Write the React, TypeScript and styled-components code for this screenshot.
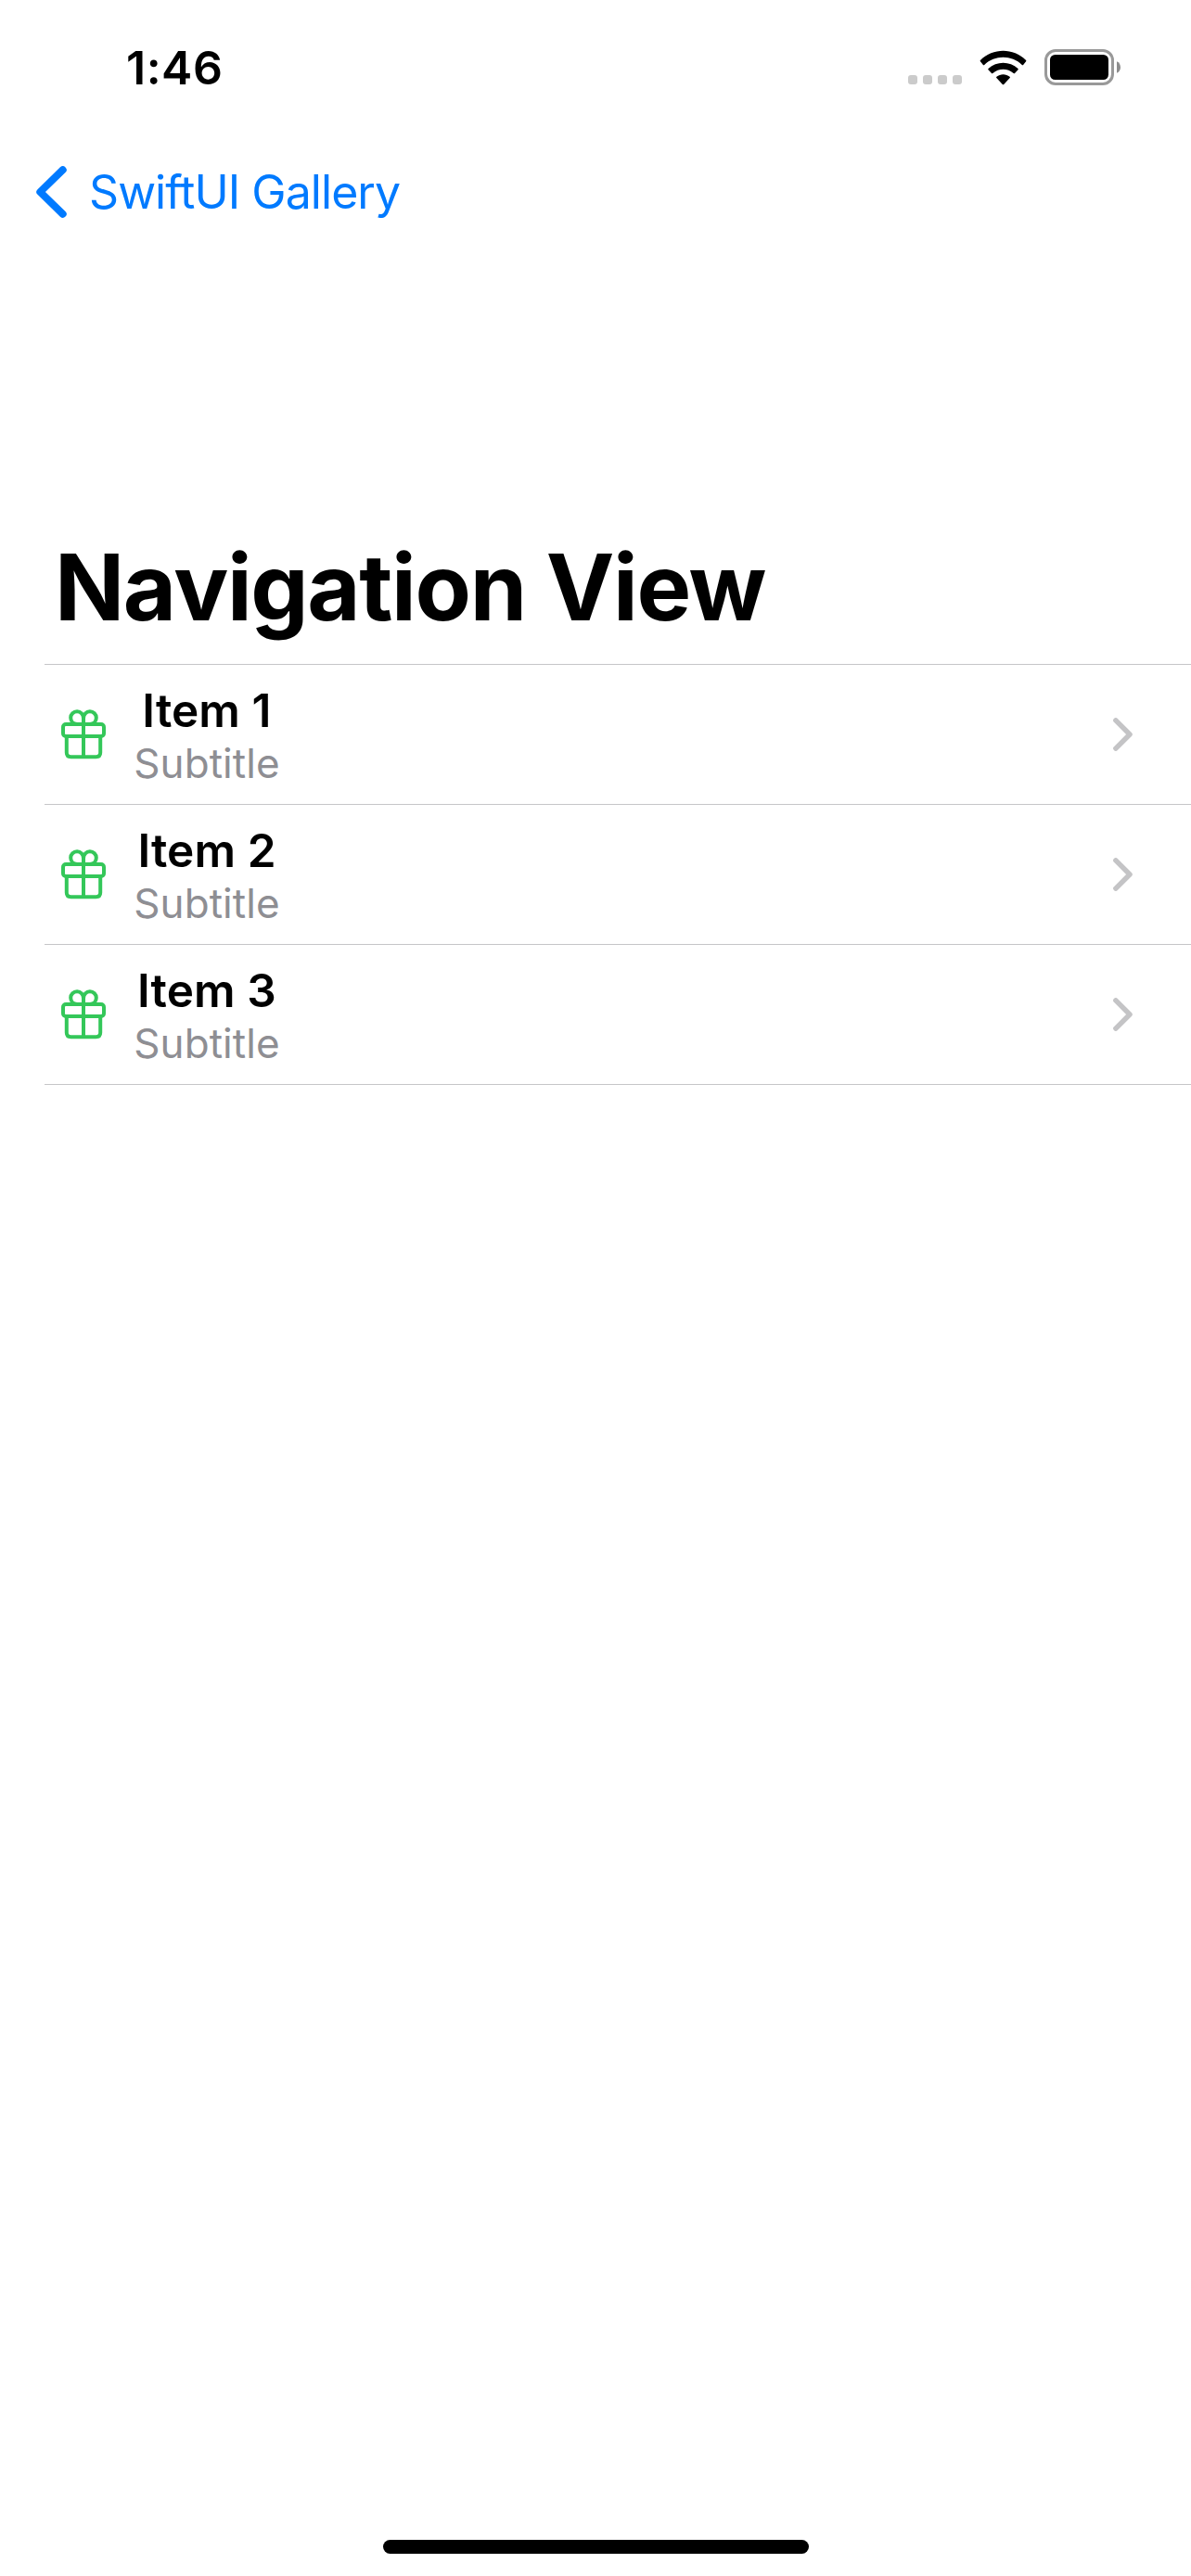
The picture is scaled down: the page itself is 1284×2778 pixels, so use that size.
import React from "react";
import styled, { createGlobalStyle } from "styled-components";

const GlobalStyle = createGlobalStyle`
  body {
    margin: 0;
    background: #ffffff;
    font-family: Inter, "Liberation Sans", sans-serif;
    color: #000000;
  }
`;

const Screen = styled.div`
  display: flex;
  flex-direction: column;
  width: 1284px;
  height: 2778px;
  box-sizing: border-box;
  overflow: hidden;
  background: #ffffff;
`;

const StatusBar = styled.header`
  display: flex;
  justify-content: space-between;
  height: 141px;
  padding: 0 76px 0 136px;
  box-sizing: border-box;
`;

const Time = styled.span`
  margin-top: 43px;
  font-size: 50px;
  line-height: 60px;
  font-weight: 600;
  letter-spacing: 0.5px;
`;

const Indicators = styled.div`
  display: flex;
  align-items: flex-end;
  height: 92px;
`;

const Dots = styled.div`
  display: flex;
  gap: 6px;
  margin: 0 19px 1px 0;
`;

const Dot = styled.i`
  width: 10px;
  height: 10px;
  border-radius: 3px;
  background: #cbcbcb;
`;

const WifiGlyph = styled.svg`
  width: 51px;
  height: 38px;
  margin: 0 19px 0 0;
`;

const BatteryGlyph = styled.svg`
  width: 82px;
  height: 39px;
`;

const NavBar = styled.nav`
  display: flex;
  height: 132px;
  padding-left: 38px;
`;

const BackButton = styled.a`
  display: flex;
  align-items: center;
  gap: 23px;
  height: 132px;
  color: #007aff;
`;

const BackLabel = styled.span`
  font-size: 50px;
  line-height: 60px;
  letter-spacing: -0.95px;
  white-space: nowrap;
`;

const Title = styled.h1`
  margin: 300px 0 0 59px;
  font-size: 98.7px;
  line-height: 120px;
  font-weight: 700;
  letter-spacing: -1.35px;
  white-space: nowrap;
`;

const List = styled.ul`
  list-style: none;
  margin: 23px 0 0 48px;
  padding: 0;
  border-top: 1px solid #c6c6c8;
`;

const Row = styled.li`
  display: flex;
  align-items: center;
  height: 151px;
  padding: 0 63px 0 18px;
  box-sizing: border-box;
  border-bottom: 1px solid #c6c6c8;
`;

const RowText = styled.div`
  display: flex;
  flex-direction: column;
  align-items: center;
  flex: none;
  width: 158px;
  margin: 2px auto 0 30px;
`;

const RowTitle = styled.span`
  font-size: 49.5px;
  line-height: 60px;
  font-weight: 600;
  letter-spacing: 0.1px;
  white-space: nowrap;
`;

const RowSubtitle = styled.span`
  font-size: 44px;
  line-height: 54px;
  letter-spacing: 0.05px;
  color: #8e8e93;
  white-space: nowrap;
`;

const HomeIndicator = styled.div`
  width: 459px;
  height: 15px;
  margin: auto 0 24px 413px;
  border-radius: 8px;
  background: #000000;
`;

const Wifi = () => (
  <WifiGlyph viewBox="0 0 51 38">
    <path d="M5.2 15.9a.9.9 0 0 1-1.3 0L.9 12.2a.9.9 0 0 1 0-1.2C14.600-2.700 36.400-2.700 50.100 11a.9.9 0 0 1 0 1.200l-3 3.700a.9.9 0 0 1-1.300 0C34.600 5 16.400 5 5.200 15.900z" />
    <path d="M14.300 24.900a.9.9 0 0 1-1.300 0l-3.500-3.600a.9.9 0 0 1 0-1.300C18.400 11.600 32.600 11.600 41.500 20a.9.9 0 0 1 0 1.300L38 24.900a.9.9 0 0 1-1.300 0C30.400 19.200 20.600 19.200 14.300 24.900z" />
    <path d="M26.200 36.900a1 1 0 0 1-1.400 0L18.300 30a.9.9 0 0 1 .1-1.300C22.500 25.300 28.500 25.300 32.600 28.700a.9.9 0 0 1 .1 1.300z" />
  </WifiGlyph>
);

const Battery = () => (
  <BatteryGlyph viewBox="0 0 82 39">
    <rect x="1.500" y="1.500" width="72" height="36" rx="10.500" fill="none" stroke="#999999" strokeWidth="3" />
    <rect x="6" y="6" width="63" height="27" rx="5.500" />
    <path d="M78 13.200C83.300 15.500 83.300 23.500 78 25.800z" fill="#8c8c8c" />
  </BatteryGlyph>
);

const BackChevron = () => (
  <svg width="35" height="58" viewBox="0 0 35 58" fill="none" stroke="currentColor" strokeWidth="8" strokeLinecap="round" strokeLinejoin="round">
    <path d="M29.700 5.200L5.300 29L29.700 52.800" />
  </svg>
);

const Gift = () => (
  <svg width="48" height="54" viewBox="0 0 48 54" fill="none" stroke="#34c759" strokeWidth="4">
    <rect x="2" y="16" width="44" height="13" rx="3" />
    <path d="M5.800 29V46.500Q5.800 51.200 10.500 51.200H37.500Q42.200 51.200 42.200 46.500V29" />
    <path d="M24 12V51" />
    <path d="M24 16V9.500C24 5.300 20.900 2.300 17.100 2.300S10.200 5.200 10.200 9.100S13.200 16 17.200 16" />
    <path d="M24 16V9.500C24 5.300 27.100 2.300 30.900 2.300S37.800 5.200 37.800 9.100S34.800 16 30.800 16" />
  </svg>
);

const Chevron = () => (
  <svg width="21" height="36" viewBox="0 0 21 36" fill="none" stroke="#c4c4c6" strokeWidth="5.500" strokeLinecap="round" strokeLinejoin="round">
    <path d="M2.900 2.900L18 18L2.900 33.100" />
  </svg>
);

const items = ["Item 1", "Item 2", "Item 3"];

export default function App() {
  return (
    <Screen>
      <GlobalStyle />
      <StatusBar>
        <Time>1:46</Time>
        <Indicators>
          <Dots>
            <Dot />
            <Dot />
            <Dot />
            <Dot />
          </Dots>
          <Wifi />
          <Battery />
        </Indicators>
      </StatusBar>
      <NavBar>
        <BackButton>
          <BackChevron />
          <BackLabel>SwiftUI Gallery</BackLabel>
        </BackButton>
      </NavBar>
      <Title>Navigation View</Title>
      <List>
        {items.map((item) => (
          <Row key={item}>
            <Gift />
            <RowText>
              <RowTitle>{item}</RowTitle>
              <RowSubtitle>Subtitle</RowSubtitle>
            </RowText>
            <Chevron />
          </Row>
        ))}
      </List>
      <HomeIndicator />
    </Screen>
  );
}
